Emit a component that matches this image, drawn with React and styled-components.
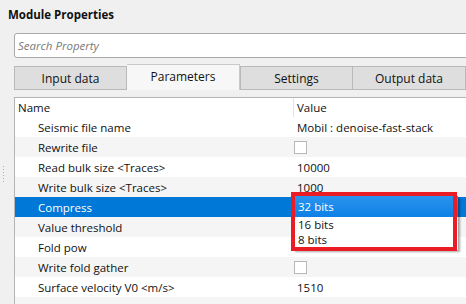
import styled, { createGlobalStyle } from 'styled-components'

const Global = createGlobalStyle`
    body {
        margin: 0;
        background: #f0f0f0;
        font-family: "Open Sans", "Noto Sans", sans-serif;
        font-size: 11.5px;
        color: #111;
        overflow: hidden;
    }
`

const Pagina = styled.div`
    position: relative;
    width: 466px;
    height: 304px;
    overflow: hidden;
`

const Titulo = styled.h1`
    margin: 0;
    height: 33px;
    padding: 5px 0 0 8px;
    box-sizing: border-box;
    font-size: 11.5px;
    font-weight: 700;
    line-height: 20px;
`

const Corpo = styled.div`
    display: flex;
`

const Divisor = styled.div`
    width: 14px;
    flex-shrink: 0;
    display: flex;
    justify-content: center;
    padding-top: 133px;
    box-sizing: border-box;
    &::before {
        content: '';
        width: 1px;
        height: 18px;
        margin-left: -7px;
        background: repeating-linear-gradient(180deg, #b0b0b0 0 1px, transparent 1px 3px);
    }
`

const Coluna = styled.div`
    flex: 1;
    min-width: 0;
`

const Busca = styled.div`
    height: 25px;
    box-sizing: border-box;
    margin-right: -4px;
    border: 1px solid #a9a9a9;
    border-radius: 3px;
    background: #fff;
    display: flex;
    align-items: center;
    padding-left: 3px;
    color: #7a7a7a;
    font-style: italic;
`

const Abas = styled.div`
    display: flex;
    align-items: flex-end;
    height: 26px;
    margin-top: 6px;
`

const Aba = styled.div`
    width: 113px;
    height: ${p => (p.$ativa ? '26px' : '24px')};
    box-sizing: border-box;
    border: 1px solid ${p => (p.$ativa ? '#c9c9c9' : '#b9b9b9')};
    border-bottom: ${p => (p.$ativa ? 'none' : '1px solid #b9b9b9')};
    border-left: ${p => (p.$semEsquerda ? 'none' : undefined)};
    background: ${p => (p.$ativa ? '#f7f7f7' : '#dedede')};
    display: flex;
    align-items: center;
    justify-content: center;
    padding-bottom: ${p => (p.$ativa ? '3px' : '0')};
    font-size: 12px;
`

const Tabela = styled.div`
    margin-top: 7px;
    border-top: 1px solid #b5b5b5;
    border-left: 1px solid #b5b5b5;
    background: #fff;
`

const Linha = styled.div`
    display: grid;
    grid-template-columns: 278px 1fr;
    height: 20px;
    align-items: center;
    background: ${p => (p.$selecionada ? '#0078d7' : p.$par ? '#fff' : '#f5f5f5')};
    color: ${p => (p.$selecionada ? '#fff' : '#111')};
`

const Cabecalho = styled(Linha)`
    height: 19px;
    background: #fff;
`

const CelulaCab = styled.div`
    height: 100%;
    display: flex;
    align-items: center;
    padding-left: 3px;
    border-left: ${p => (p.$valor ? '1px solid #e3e3e3' : 'none')};
`

const Nome = styled.div`
    padding-left: 23px;
    white-space: nowrap;
`

const Valor = styled.div`
    padding-left: 4px;
    white-space: nowrap;
    display: flex;
    align-items: center;
`

const Caixa = styled.span`
    width: 13px;
    height: 13px;
    box-sizing: border-box;
    border: 1px solid #b8b8b8;
    background: #fff;
    margin-left: -3px;
`

const Lista = styled.div`
    position: absolute;
    left: 293px;
    top: 196px;
    width: 165px;
    height: 54px;
    background: #fff;
    box-shadow: 2px 2px 2px rgba(0, 0, 0, 0.35);
`

const Opcao = styled.div`
    height: ${p => (p.$primeira ? '21px' : '15px')};
    display: flex;
    align-items: center;
    padding-left: 5px;
    background: ${p => (p.$ativa ? 'linear-gradient(180deg, #2a94ee, #0d80e6)' : 'transparent')};
    color: ${p => (p.$ativa ? '#fff' : '#111')};
`

const Marcacao = styled.div`
    position: absolute;
    left: 291px;
    top: 192px;
    width: 166px;
    height: 59px;
    box-sizing: border-box;
    border: 4px solid #ea1c26;
`

// valores das linhas cobertas pela lista aberta ficam vazios
const propriedades = [
    { nome: 'Seismic file name', valor: 'Mobil : denoise-fast-stack' },
    { nome: 'Rewrite file', caixa: true },
    { nome: 'Read bulk size <Traces>', valor: '10000' },
    { nome: 'Write bulk size <Traces>', valor: '1000' },
    { nome: 'Compress', valor: '', selecionada: true },
    { nome: 'Value threshold', valor: '' },
    { nome: 'Fold pow', valor: '' },
    { nome: 'Write fold gather', caixa: true },
    { nome: 'Surface velocity V0 <m/s>', valor: '1510' },
    { nome: 'NMO', valor: '' },
]

export default function App() {
    return (
        <Pagina>
            <Global />
            <Titulo>Module Properties</Titulo>
            <Corpo>
                <Divisor />
                <Coluna>
                    <Busca>Search Property</Busca>
                    <Abas>
                        <Aba>Input data</Aba>
                        <Aba $ativa $semEsquerda>Parameters</Aba>
                        <Aba>Settings</Aba>
                        <Aba $semEsquerda>Output data</Aba>
                    </Abas>
                    <Tabela>
                        <Cabecalho>
                            <CelulaCab>Name</CelulaCab>
                            <CelulaCab $valor>Value</CelulaCab>
                        </Cabecalho>
                        {propriedades.map((p, i) => (
                            <Linha key={p.nome} $par={i % 2 === 0} $selecionada={p.selecionada}>
                                <Nome>{p.nome}</Nome>
                                <Valor>{p.caixa ? <Caixa /> : p.valor}</Valor>
                            </Linha>
                        ))}
                    </Tabela>
                </Coluna>
            </Corpo>
            <Lista>
                <Opcao $primeira $ativa>32 bits</Opcao>
                <Opcao>16 bits</Opcao>
                <Opcao>8 bits</Opcao>
            </Lista>
            <Marcacao />
        </Pagina>
    )
}
